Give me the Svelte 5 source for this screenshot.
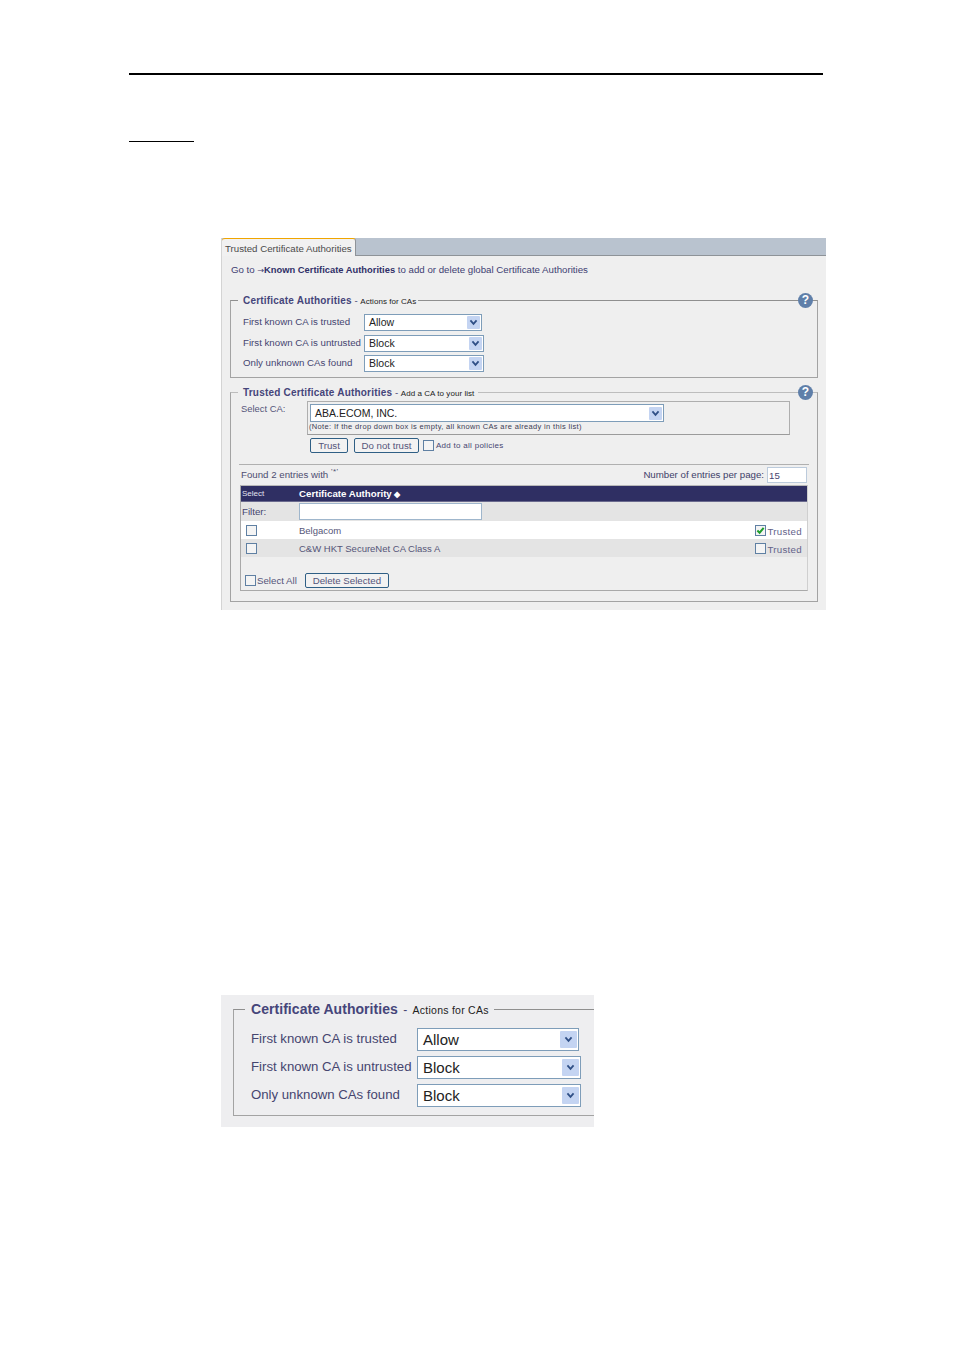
<script>
  const actions = [
    { label: 'First known CA is trusted', value: 'Allow', short: true },
    { label: 'First known CA is untrusted', value: 'Block' },
    { label: 'Only unknown CAs found', value: 'Block' }
  ]

  const entries = [
    { name: 'Belgacom', trusted: true },
    { name: 'C&W HKT SecureNet CA Class A', trusted: false }
  ]
</script>

{#snippet arrow()}
  <span class="arrow">
    <svg viewBox="0 0 10 8" width="9" height="7">
      <path d="M1.5 1.5 L5 5.5 L8.5 1.5" fill="none" stroke="#2f4f86" stroke-width="2" />
    </svg>
  </span>
{/snippet}

{#snippet checkbox(checked)}
  <span class="checkbox">
    {#if checked}
      <svg viewBox="0 0 10 10" width="9" height="9">
        <path d="M1.5 5 L4 7.5 L8.5 2" fill="none" stroke="#1f9e2c" stroke-width="2.2" />
      </svg>
    {/if}
  </span>
{/snippet}

<div class="page">
  <div class="rule"></div>
  <div class="underline"></div>

  <section class="panel">
    <div class="tabbar">
      <div class="tab">Trusted Certificate Authorities</div>
    </div>
    <p class="intro">Go to <span class="goto">→</span><b>Known Certificate Authorities</b> to add or delete global Certificate Authorities</p>

    <fieldset class="group actions">
      <legend><b>Certificate Authorities</b> <i>-</i> <small>Actions for CAs</small></legend>
      <span class="help">?</span>
      {#each actions as row}
        <div class="row">
          <span class="row-label">{row.label}</span>
          <div class="select" class:short={row.short}>
            <span>{row.value}</span>
            {@render arrow()}
          </div>
        </div>
      {/each}
    </fieldset>

    <fieldset class="group trusted">
      <legend><b>Trusted Certificate Authorities</b> <i>-</i> <small>Add a CA to your list</small></legend>
      <span class="help">?</span>
      <div class="select-ca">
        <span class="select-ca-label">Select CA:</span>
        <div class="select-ca-box">
          <div class="select wide">
            <span>ABA.ECOM, INC.</span>
            {@render arrow()}
          </div>
          <div class="note">(Note: If the drop down box is empty, all known CAs are already in this list)</div>
        </div>
      </div>
      <div class="buttons">
        <button class="trust">Trust</button>
        <button class="no-trust">Do not trust</button>
        {@render checkbox(false)}
        <span class="add-all">Add to all policies</span>
      </div>
      <hr />
      <div class="found">
        <span>Found 2 entries with <sup>'*'</sup></span>
        <span class="per-page">Number of entries per page:</span>
        <input class="per-page-input" value="15" />
      </div>
      <div class="table">
        <div class="head">
          <span class="select-col">Select</span>
          <b>Certificate Authority <em>◆</em></b>
        </div>
        <div class="filter">
          <span class="filter-label">Filter:</span>
          <input class="filter-input" />
        </div>
        {#each entries as entry, i}
          <div class="entry" class:odd={i % 2 === 1}>
            <span class="entry-check">{@render checkbox(false)}</span>
            <span class="entry-name">{entry.name}</span>
            <span class="entry-trust">{@render checkbox(entry.trusted)}<span>Trusted</span></span>
          </div>
        {/each}
        <div class="table-footer">
          {@render checkbox(false)}
          <span class="select-all">Select All</span>
          <button class="delete">Delete Selected</button>
        </div>
      </div>
    </fieldset>
  </section>

  <section class="panel zoomed">
    <fieldset class="group big">
      <legend><b>Certificate Authorities</b> <i>-</i> <small>Actions for CAs</small></legend>
      {#each actions as row}
        <div class="row">
          <span class="row-label">{row.label}</span>
          <div class="select" class:short={row.short}>
            <span>{row.value}</span>
            {@render arrow()}
          </div>
        </div>
      {/each}
    </fieldset>
  </section>
</div>

<style>
  :global(body) {
    background: #fff;
  }

  .page {
    padding: 73px 0 0 129px;
    font-family: "Liberation Sans", Arial, sans-serif;
    font-size: 9.7px;
    color: #45456f;
  }

  .rule {
    width: 694px;
    height: 2px;
    background: #000;
  }

  .underline {
    width: 65px;
    height: 1px;
    margin-top: 66px;
    background: #000;
  }

  .panel {
    box-sizing: border-box;
    width: 605px;
    margin: 96px 0 0 92px;
    padding-bottom: 8px;
    background: #efefef;
    border-left: 1px solid #d4d4d4;
  }

  .tabbar {
    box-sizing: border-box;
    height: 18px;
    background: #b9c3cf;
    border-bottom: 1px solid #8e9398;
  }

  .tab {
    box-sizing: border-box;
    width: 134px;
    height: 18px;
    padding: 1px 0 0 3px;
    background: #f1f1f1;
    border-top: 1px solid #f0a500;
    border-right: 1px solid #8e9398;
    border-radius: 3px 3px 0 0;
    line-height: 17px;
    color: #4b4b4b;
    white-space: nowrap;
  }

  .intro {
    height: 14px;
    margin: 7px 0 0 9px;
    line-height: 14px;
    color: #3e3e72;
  }

  .intro b {
    font-size: 9.35px;
    color: #303068;
  }

  .goto {
    font-family: "DejaVu Sans", sans-serif;
    font-size: 8px;
  }

  .group {
    position: relative;
    box-sizing: border-box;
    width: 588px;
    margin: 0 0 0 8px;
    padding: 7px 8px 10px;
    min-width: 0;
    border: 1px solid #a3a3a3;
    border-top-color: #8f8f8f;
  }

  .group legend {
    height: 14px;
    margin-left: -1px;
    padding: 0 2px 0 5px;
    line-height: 16px;
    white-space: nowrap;
  }

  .group legend b {
    font-size: 10px;
    color: #45457a;
    letter-spacing: 0.2px;
  }

  .group legend i {
    font-style: normal;
  }

  .group legend small {
    font-size: 8px;
    letter-spacing: 0.05px;
    color: #222;
  }

  .actions {
    margin-top: 16px;
    padding-bottom: 5px;
  }

  .trusted {
    margin-top: 7px;
    padding-top: 2px;
    border-top-color: #bdbdbd;
  }

  .trusted legend {
    padding-right: 4px;
  }

  .help {
    position: absolute;
    top: -14px;
    right: 4px;
    width: 15px;
    height: 15px;
    border-radius: 50%;
    background: #5f7fa9;
    color: #fff;
    font-size: 12px;
    font-weight: bold;
    line-height: 15px;
    text-align: center;
  }

  .row {
    display: flex;
    align-items: center;
    height: 17px;
    margin-bottom: 3.5px;
  }

  .row:last-child {
    margin-bottom: 0;
  }

  .row-label {
    box-sizing: border-box;
    width: 125px;
    padding: 0 0 2px 4px;
    white-space: nowrap;
  }

  .select {
    box-sizing: border-box;
    display: flex;
    align-items: center;
    justify-content: space-between;
    width: 120px;
    height: 100%;
    padding: 0 1px 0 4px;
    background: #fff;
    border: 1px solid #7e9db9;
    color: #222;
    font-size: 10.5px;
  }

  .select > span:first-child {
    padding-bottom: 1px;
  }

  .select.short {
    width: 118px;
  }

  .select.wide {
    width: 354px;
    height: 18px;
  }

  .arrow {
    display: flex;
    align-items: center;
    justify-content: center;
    width: 13px;
    height: 13px;
    background: #c4d4f2;
    border-radius: 1px;
  }

  .select-ca {
    display: flex;
  }

  .select-ca-label {
    box-sizing: border-box;
    width: 68px;
    padding: 2px 0 0 2px;
    font-size: 9.4px;
    color: #55557a;
  }

  .select-ca-box {
    box-sizing: border-box;
    width: 483px;
    height: 34px;
    padding: 2px;
    border: 1px solid #aeaeae;
    border-bottom-color: #9b9b9b;
  }

  .note {
    height: 9px;
    margin: 0 0 0 -1px;
    font-size: 7.5px;
    line-height: 9px;
    letter-spacing: 0.34px;
    white-space: nowrap;
    color: #3d3d55;
  }

  .buttons {
    display: flex;
    align-items: center;
    height: 15px;
    margin: 3px 0 0 71px;
  }

  button {
    box-sizing: border-box;
    height: 15px;
    padding: 0;
    background: #f2f2f2;
    border: 1px solid #2f5f85;
    border-radius: 2px;
    font: inherit;
    line-height: 13px;
    color: #55557a;
  }

  .trust {
    width: 38px;
  }

  .no-trust {
    width: 65px;
    margin: 0 4px 0 6px;
  }

  .checkbox {
    box-sizing: border-box;
    display: inline-flex;
    align-items: center;
    justify-content: center;
    flex: none;
    width: 11px;
    height: 11px;
    background: #f4f4f4;
    border: 1px solid #5f80a3;
  }

  .add-all {
    margin-left: 2px;
    font-size: 8px;
    letter-spacing: 0.28px;
  }

  hr {
    width: 570px;
    height: 0;
    margin: 11px 0 0;
    border: none;
    border-top: 1px solid #b0b0b0;
  }

  .found {
    display: flex;
    align-items: center;
    height: 16px;
    margin: 2px 0 0 2px;
    color: #4d4d6f;
  }

  .found > span {
    padding-bottom: 2px;
  }

  .found sup {
    font-size: 8px;
    line-height: 0;
    letter-spacing: 0.5px;
  }

  .per-page {
    margin: 0 3px 0 auto;
    color: #3e3e68;
  }

  .per-page-input {
    box-sizing: border-box;
    width: 40px;
    height: 16px;
    margin-right: 2px;
    padding: 0 1px;
    background: #fff;
    border: 1px solid #bccbdc;
    font: inherit;
    color: #45456f;
  }

  .table {
    box-sizing: border-box;
    width: 568px;
    height: 106px;
    margin: 2px 0 0 1px;
    border: 1px solid #cfcfcf;
    border-bottom-color: #a9a9a9;
    border-top-color: #b8b8b8;
    border-left-color: #a9a9a9;
  }

  .head {
    display: flex;
    align-items: center;
    height: 15px;
    background: #2f2f63;
    border-bottom: 1px solid #6a6a8e;
    color: #fff;
  }

  .select-col {
    box-sizing: border-box;
    width: 58px;
    padding-left: 1px;
    font-size: 8px;
    color: #e4e4f0;
  }

  .head em {
    font-style: normal;
    font-size: 8px;
  }

  .filter {
    display: flex;
    align-items: center;
    height: 19px;
    background: #e4e4e4;
  }

  .filter-label {
    box-sizing: border-box;
    width: 58px;
    padding-left: 1px;
  }

  .filter-input {
    box-sizing: border-box;
    width: 183px;
    height: 17px;
    padding: 0;
    background: #fff;
    border: 1px solid #9fb6cc;
  }

  .entry {
    display: flex;
    align-items: center;
    height: 18px;
    background: #fff;
  }

  .entry.odd {
    background: #e4e4e4;
  }

  .entry-check {
    box-sizing: border-box;
    display: flex;
    width: 58px;
    padding-left: 5px;
  }

  .entry-name {
    font-size: 9.5px;
    color: #555578;
  }

  .entry-trust {
    display: flex;
    align-items: center;
    gap: 1px;
    margin: 0 5px 0 auto;
    color: #63638a;
  }

  .entry-trust span:last-child {
    padding-top: 3px;
    letter-spacing: 0.3px;
  }

  .table-footer {
    display: flex;
    align-items: center;
    margin-top: 16px;
    padding-left: 4px;
  }

  .select-all {
    margin-left: 1px;
    color: #55557a;
  }

  .delete {
    width: 84px;
    margin-left: 8px;
  }

  .zoomed {
    width: 373px;
    margin-top: 385px;
    padding: 5px 0 11px;
    background: #eeeef0;
    border: none;
  }

  .big {
    width: 361px;
    margin-left: 12px;
    padding: 10px 0 8px 17px;
    border-right: none;
    font-size: 12px;
  }

  .big legend {
    height: 18px;
    margin-left: -6px;
    padding: 0 5px 0 6px;
    line-height: 18px;
  }

  .big legend b {
    font-size: 14px;
    letter-spacing: 0.05px;
  }

  .big legend i {
    margin: 0 2px;
  }

  .big legend small {
    font-size: 10.5px;
    letter-spacing: 0.25px;
  }

  .big .row {
    height: 23px;
    margin-bottom: 5px;
  }

  .big .row:last-child {
    margin-bottom: 0;
  }

  .big .row-label {
    width: 166px;
    padding: 0 0 2px;
    font-size: 13.2px;
  }

  .big .select {
    width: 164px;
    padding-left: 5px;
    font-size: 15px;
  }

  .big .select.short {
    width: 162px;
  }

  .big .arrow {
    width: 17px;
    height: 17px;
  }
</style>
